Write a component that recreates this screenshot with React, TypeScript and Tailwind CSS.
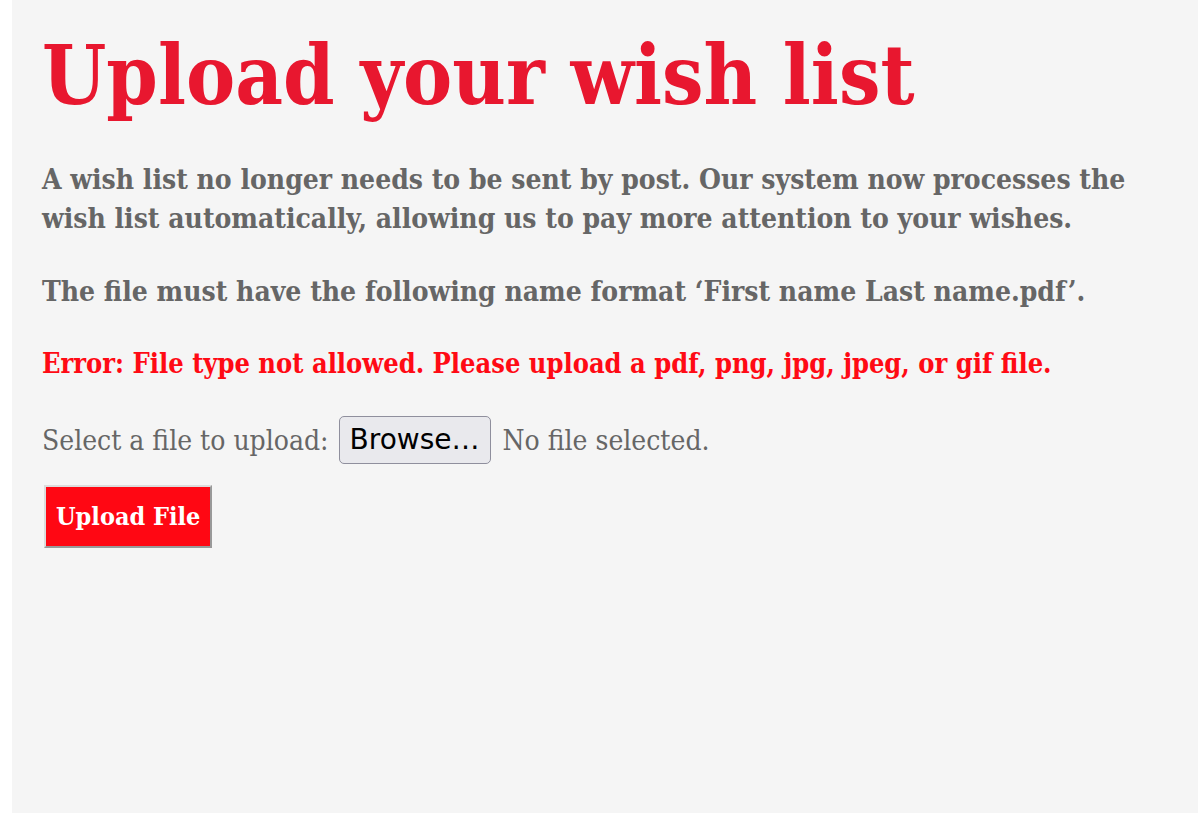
export default function App() {
  return (
    <div className="min-h-screen bg-white pl-3">
      <div
        className="h-[813px] bg-[#f5f5f5] px-[30px] pt-[34px] text-[#666666]"
        style={{ fontFamily: '"DejaVu Serif Condensed", "DejaVu Serif", serif' }}
      >
        <h1 className="text-[82px] font-bold leading-none text-[#e8172f]">Upload your wish list</h1>
        <p className="mt-[44px] text-[28px] font-bold leading-[39px]">
          A wish list no longer needs to be sent by post. Our system now processes the wish list automatically, allowing us to pay more attention to your wishes.
        </p>
        <p className="mt-[34px] text-[28px] font-bold leading-[39px]">
          The file must have the following name format ‘First name Last name.pdf’.
        </p>
        <p className="mt-[33px] text-[27px] font-bold leading-[39px] text-[#ff0a14]">
          Error: File type not allowed. Please upload a pdf, png, jpg, jpeg, or gif file.
        </p>
        <form className="mt-[33px]">
          <div className="flex items-center text-[28px] leading-[39px]">
            <label htmlFor="file">Select a file to upload:</label>
            <button
              type="button"
              id="file"
              className="ml-[10px] h-[48px] rounded-[5px] border border-[#8f8f9d] bg-[#e9e9ed] px-[10px] text-[28px] leading-none text-black"
              style={{ fontFamily: '"DejaVu Sans", sans-serif' }}
            >
              Browse…
            </button>
            <span className="ml-3">No file selected.</span>
          </div>
          <button
            type="submit"
            className="ml-[2px] mt-[21px] h-[63px] border-2 border-t-[#dcdcdc] border-l-[#dcdcdc] border-r-[#999999] border-b-[#999999] bg-[#ff0713] px-[10px] text-[25px] font-bold text-white"
          >
            Upload File
          </button>
        </form>
      </div>
    </div>
  )
}
